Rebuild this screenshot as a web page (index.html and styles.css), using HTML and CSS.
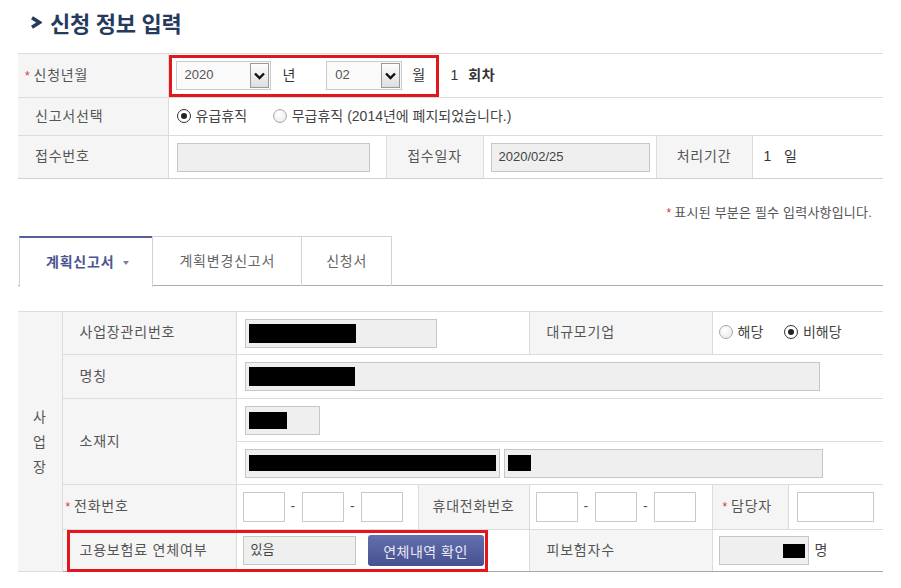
FILE: index.html
```html
<!DOCTYPE html>
<html lang="ko">
  <head>
    <meta charset="UTF-8" />
    <meta name="viewport" content="width=device-width, initial-scale=1.0" />
    <link rel="stylesheet" href="styles.css">
    <title>신청 정보 입력</title>
  </head>
  <body>
    <div class="page">
      <h2 class="title">
        <svg class="chev" width="12" height="13" viewBox="0 0 12 13"><polyline points="2,1.8 9.5,6.5 2,11.2" fill="none" stroke="#263a5e" stroke-width="3.6" stroke-linejoin="miter"/></svg>
        신청 정보 입력
      </h2>

      <table class="grid info">
        <colgroup>
          <col class="w150"><col class="w218"><col class="w97"><col class="w173"><col class="w96"><col class="w131">
        </colgroup>
        <tr class="h44">
          <th class="req"><span class="star">*</span>신청년월</th>
          <td colspan="5" class="pl0">
            <div class="hl">
              <span class="sel w95"><span class="sel-v">2020</span><span class="sel-btn"><svg width="11" height="8" viewBox="0 0 11 8"><polyline points="1,1.5 5.5,6 10,1.5" fill="none" stroke="#111" stroke-width="2.4"/></svg></span></span>
              <span class="unit">년</span>
              <span class="sel w76"><span class="sel-v">02</span><span class="sel-btn"><svg width="11" height="8" viewBox="0 0 11 8"><polyline points="1,1.5 5.5,6 10,1.5" fill="none" stroke="#111" stroke-width="2.4"/></svg></span></span>
              <span class="unit">월</span>
            </div>
            <span class="num">1</span><b class="cnt">회차</b>
          </td>
        </tr>
        <tr class="h38">
          <th>신고서선택</th>
          <td colspan="5">
            <span class="radio on"></span><span class="rlabel">유급휴직</span>
            <span class="radio gap"></span><span class="rlabel">무급휴직 (2014년에 폐지되었습니다.)</span>
          </td>
        </tr>
        <tr class="h43">
          <th>접수번호</th>
          <td><span class="fld w193"></span></td>
          <th class="mid">접수일자</th>
          <td class="pl7"><span class="fld w159"><span class="fv">2020/02/25</span></span></td>
          <th class="mid">처리기간</th>
          <td class="pl11"><span class="num0">1</span><span class="day">일</span></td>
        </tr>
      </table>

      <p class="note"><span class="star">*</span>표시된 부분은 필수 입력사항입니다.</p>

      <ul class="tabs">
        <li class="tab on">계획신고서<span class="caret"></span></li>
        <li class="tab">계획변경신고서</li>
        <li class="tab">신청서</li>
      </ul>

      <table class="grid biz">
        <colgroup>
          <col class="w44"><col class="w174"><col class="w182"><col class="w111"><col class="w183"><col class="w76"><col class="w95">
        </colgroup>
        <tr class="h43">
          <th class="side" rowspan="6">사<br>업<br>장</th>
          <th>사업장관리번호</th>
          <td colspan="2"><span class="fld w192"><span class="blk w107"></span></span></td>
          <th>대규모기업</th>
          <td colspan="2" class="pl6">
            <span class="radio"></span><span class="rlabel">해당</span>
            <span class="radio on gap2"></span><span class="rlabel">비해당</span>
          </td>
        </tr>
        <tr class="h44">
          <th>명칭</th>
          <td colspan="5"><span class="fld w575"><span class="blk w106"></span></span></td>
        </tr>
        <tr class="h43">
          <th rowspan="2">소재지</th>
          <td colspan="5"><span class="fld w75"><span class="blk w38"></span></span></td>
        </tr>
        <tr class="h43">
          <td colspan="5">
            <span class="fld w255"><span class="blk w247 tight"></span></span><span class="fld w319 ml4"><span class="blk w23"></span></span>
          </td>
        </tr>
        <tr class="h45">
          <th class="req"><span class="star">*</span>전화번호</th>
          <td class="pl6">
            <span class="phone"><span class="ph"></span>-<span class="ph"></span>-<span class="ph"></span></span>
          </td>
          <th class="mid">휴대전화번호</th>
          <td class="pl6">
            <span class="phone"><span class="ph"></span>-<span class="ph"></span>-<span class="ph"></span></span>
          </td>
          <th class="req2"><span class="star">*</span>담당자</th>
          <td class="pl8"><span class="ph w77"></span></td>
        </tr>
        <tr class="h42">
          <th class="rel">
            고용보험료 연체여부
            <span class="mark"></span>
          </th>
          <td colspan="2" class="pl6">
            <span class="fld w113"><span class="fv">있음</span></span><button class="btn">연체내역 확인</button>
          </td>
          <th>피보험자수</th>
          <td colspan="2" class="pl6">
            <span class="fld w90 right"><span class="blk w22 short"></span></span><span class="unit2">명</span>
          </td>
        </tr>
      </table>
    </div>
  </body>
</html>
```
FILE: styles.css
```css
* {
  box-sizing: border-box;
}
body {
  margin: 0;
  background: #fff;
  font-family: "Liberation Sans", "Noto Sans CJK KR", sans-serif;
  font-size: 14px;
  line-height: 1.4;
  letter-spacing: 0.8px;
  color: #555;
}
.page {
  width: 865px;
  margin-left: 18px;
}

/* title */
.title {
  margin: 0 0 9px 0;
  height: 44px;
  padding-left: 12px;
  display: flex;
  align-items: center;
  font-family: "Noto Sans CJK KR", sans-serif;
  font-size: 22px;
  font-weight: bold;
  letter-spacing: -0.3px;
  color: #263a5e;
}
.chev {
  margin-right: 8px;
}

/* tables */
.grid {
  width: 100%;
  border-collapse: collapse;
  table-layout: fixed;
}
.grid th,
.grid td {
  border: 1px solid #dcdcdc;
  padding: 0 8px;
  text-align: left;
  font-weight: normal;
  vertical-align: middle;
  white-space: nowrap;
}
.grid th {
  background: #f5f5f5;
  color: #555;
  padding-left: 17px;
}
.grid tr > :last-child {
  border-right: 0;
}
.grid tr > :first-child {
  border-left: 0;
}
.info {
  border-top: 1px solid #c6c6c6;
}
.info tr:last-child th,
.info tr:last-child td {
  border-bottom: 1px solid #cfcfcf;
}
.biz {
  border-top: 1px solid #7479ab;
}
.biz tr:last-child th,
.biz tr:last-child td {
  border-bottom: 1px solid #a8a8a8;
}
.biz th {
  padding-left: 17px;
}
.biz .side {
  border-left: 0;
  padding: 0;
  text-align: center;
  line-height: 25px;
  padding-top: 2px;
}
.grid th.mid {
  text-align: center;
  padding: 0;
}
.grid th.req {
  padding-left: 7px;
}
.biz th.req {
  padding-left: 3px;
}
.grid th.req2 {
  padding-left: 10px;
}
.star {
  color: #d0363a;
  font-size: 12px;
  margin-right: 3px;
}

col.w150 { width: 150px; }
col.w218 { width: 218px; }
col.w97 { width: 97px; }
col.w173 { width: 173px; }
col.w96 { width: 96px; }
col.w131 { width: 131px; }
col.w44 { width: 44px; }
col.w174 { width: 174px; }
col.w182 { width: 182px; }
col.w111 { width: 111px; }
col.w183 { width: 183px; }
col.w76 { width: 76px; }
col.w95 { width: 95px; }

.h38 > * { height: 38px; }
.h42 > * { height: 42px; }
.h43 > * { height: 43px; }
.h44 > * { height: 44px; }
.h45 > * { height: 45px; }

.grid td.pl0 { padding-left: 0; }
.grid td.pl6 { padding-left: 6px; }
.grid td.pl7 { padding-left: 7px; }
.grid td.pl8 { padding-left: 8px; }
.grid td.pl11 { padding-left: 11px; }

/* red highlight */
.hl {
  display: inline-flex;
  align-items: center;
  vertical-align: middle;
  height: 42px;
  border: 3px solid #e3161d;
  padding: 0 10px 0 4px;
}
.mark {
  position: absolute;
  left: 4px;
  top: 0;
  bottom: -1px;
  width: 421px;
  border: 3px solid #e3161d;
  pointer-events: none;
}
.rel {
  position: relative;
}

/* select */
.sel {
  display: inline-flex;
  align-items: center;
  justify-content: space-between;
  height: 29px;
  border: 1px solid #cbcbcb;
  background: #fafafa;
  padding: 0 1px 0 8px;
}
.sel.w95 { width: 95px; }
.sel.w76 { width: 76px; }
.sel-v {
  font-size: 13px;
  color: #555;
  letter-spacing: 0;
}
.sel-btn {
  width: 19px;
  height: 25px;
  border: 1px solid #9a9a9a;
  background: linear-gradient(#fdfdfd, #dedede);
  display: flex;
  align-items: center;
  justify-content: center;
}
.unit {
  margin: 0 30px 0 12px;
  color: #333;
}
.unit:last-child {
  margin-right: 0;
  margin-left: 10px;
}
.num {
  margin-left: 7px;
  color: #333;
  vertical-align: middle;
}
.cnt {
  margin-left: 9px;
  color: #333;
  vertical-align: middle;
}
.num0 {
  color: #333;
}
.day {
  margin-left: 12px;
  color: #333;
}

/* radios */
.radio {
  display: inline-block;
  width: 14px;
  height: 14px;
  border-radius: 50%;
  border: 1px solid #a9a9a9;
  background: radial-gradient(circle at 40% 35%, #fff, #e6e6e6);
  vertical-align: -2px;
  position: relative;
}
.radio.on {
  border-color: #333;
  background: #fff;
}
.radio.on::after {
  content: "";
  position: absolute;
  left: 3px;
  top: 3px;
  width: 6px;
  height: 6px;
  border-radius: 50%;
  background: #222;
}
.radio.gap { margin-left: 21px; }
.radio.gap2 { margin-left: 16px; }
.rlabel {
  margin-left: 5px;
  color: #444;
  letter-spacing: 0;
}

/* fields */
.fld {
  display: inline-flex;
  align-items: center;
  vertical-align: middle;
  height: 29px;
  border: 1px solid #c6c6c6;
  background: #efefef;
  padding: 0 3px;
}
.fld.right { justify-content: flex-end; }
.fv {
  padding-left: 4px;
  font-size: 13px;
  color: #444;
  letter-spacing: 0;
}
.w193 { width: 193px; }
.w159 { width: 159px; }
.w192 { width: 192px; }
.w575 { width: 575px; }
.w75 { width: 75px; }
.w255 { width: 255px; }
.w319 { width: 319px; }
.w113 { width: 113px; }
.w90 { width: 90px; }
.w77 { width: 77px; }
.ml4 { margin-left: 4px; }

.blk {
  display: inline-block;
  height: 19px;
  background: #000;
}
.blk.tight { height: 16px; }
.blk.short { height: 14px; }
.blk.w107 { width: 107px; }
.blk.w106 { width: 106px; }
.blk.w38 { width: 38px; height: 17px; }
.blk.w247 { width: 247px; }
.blk.w23 { width: 23px; height: 16px; }
.blk.w22 { width: 22px; }

.phone {
  display: inline-flex;
  align-items: center;
  gap: 6px;
  vertical-align: middle;
  color: #555;
}
.ph {
  display: inline-block;
  vertical-align: middle;
  width: 42px;
  height: 30px;
  border: 1px solid #c9c9c9;
  background: #fff;
}
.ph.w77 { width: 77px; }

.btn {
  margin-left: 12px;
  vertical-align: middle;
  height: 31px;
  width: 116px;
  border: 0;
  border-radius: 3px;
  background: linear-gradient(#6470ae, #46508f);
  color: #e9ebf4;
  font-family: "Noto Sans CJK KR", sans-serif;
  font-size: 14px;
  letter-spacing: 0.5px;
  padding: 0;
}
.unit2 {
  margin-left: 6px;
  vertical-align: middle;
  color: #444;
}

/* note */
.note {
  margin: 24px 0 13px 0;
  line-height: 20px;
  text-align: right;
  padding-right: 11px;
  font-size: 13px;
  letter-spacing: 0.2px;
  color: #555;
}

/* tabs */
.tabs {
  display: flex;
  list-style: none;
  margin: 0 0 25px 0;
  padding: 0;
  height: 50px;
  border-bottom: 1px solid #adadad;
}
.tab {
  display: flex;
  align-items: center;
  height: 50px;
  padding: 0 26px;
  border: 1px solid #d2d2d2;
  border-bottom: 0;
  margin-left: -1px;
  color: #666;
}
.tab:last-child {
  padding: 0 24px;
}
.tab:first-child {
  margin-left: 1px;
}
.tab.on {
  border-top: 2px solid #575e9c;
  background: #fff;
  height: 51px;
  margin-bottom: -1px;
  font-weight: bold;
  color: #4c5591;
  padding: 0 23px 0 26px;
}
.caret {
  margin-left: 9px;
  width: 0;
  height: 0;
  border-left: 3.5px solid transparent;
  border-right: 3.5px solid transparent;
  border-top: 4px solid #7a7f9e;
}
```
